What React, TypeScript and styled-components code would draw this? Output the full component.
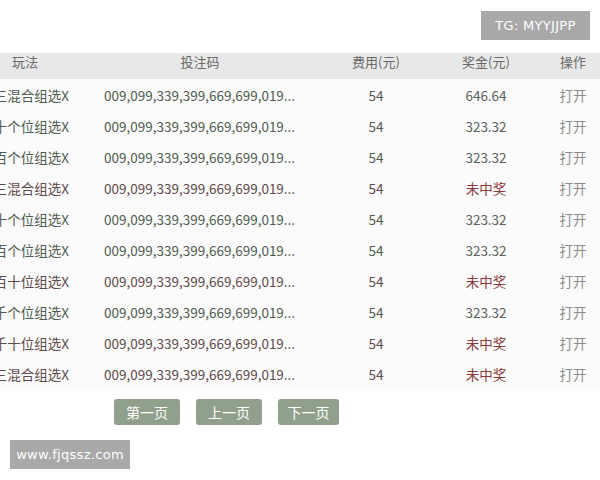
import React from "react";
import styled, { createGlobalStyle } from "styled-components";

const Global = createGlobalStyle`
  html, body { margin: 0; padding: 0; background: #ffffff; }
  body { width: 600px; height: 480px; overflow: hidden; font-family: "Noto Sans CJK SC", "Noto Sans", sans-serif; }
`;

const Page = styled.div`
  position: relative;
  width: 600px;
  height: 480px;
  overflow: hidden;
  background: #ffffff;
  padding-top: 53px;
  box-sizing: border-box;
`;

const Tag = styled.div`
  position: absolute;
  background: #a9a9a9;
  color: #ffffff;
  font-family: "DejaVu Sans", "Noto Sans", sans-serif;
  font-size: 13px;
  letter-spacing: 0.3px;
  display: flex;
  align-items: center;
  justify-content: center;
`;

const TopTag = styled(Tag)`
  top: 11px;
  left: 481px;
  width: 109px;
  height: 29px;
`;

const BottomTag = styled(Tag)`
  top: 440px;
  left: 10px;
  width: 120px;
  height: 29px;
`;

const Grid = styled.div`
  display: grid;
  grid-template-columns: 90px 220px 132px 88px 70px;
`;

const HeadRow = styled(Grid)`
  height: 26px;
  padding-bottom: 9px;
  box-sizing: border-box;
  background: #e8e8e8;
  color: #6a6a6a;
  font-size: 13px;
`;

const Body = styled.div`
  background: #fbfbfb;
`;

const Row = styled(Grid)`
  height: 31.1px;
  font-size: 13.5px;
`;

const Cell = styled.div<{ $align?: "left" | "center" | "right"; $pl?: number; $pr?: number; $color?: string }>`
  display: flex;
  align-items: center;
  justify-content: ${(p) => (p.$align === "left" ? "flex-start" : p.$align === "right" ? "flex-end" : "center")};
  padding-left: ${(p) => p.$pl ?? 0}px;
  padding-right: ${(p) => p.$pr ?? 0}px;
  white-space: nowrap;
  overflow: hidden;
  color: ${(p) => p.$color ?? "inherit"};
`;

const Pager = styled.div`
  display: flex;
  gap: 16px;
  padding-left: 114px;
  margin-top: 9px;
`;

const PageBtn = styled.div<{ $w: number }>`
  width: ${(p) => p.$w}px;
  height: 26px;
  background: #90a08d;
  border-radius: 3px;
  color: #ffffff;
  font-size: 14px;
  display: flex;
  align-items: center;
  justify-content: center;
`;

type R = { name: string; prize: string };
const rows: R[] = [
  { name: "三混合组选X", prize: "646.64" },
  { name: "十个位组选X", prize: "323.32" },
  { name: "百个位组选X", prize: "323.32" },
  { name: "三混合组选X", prize: "未中奖" },
  { name: "十个位组选X", prize: "323.32" },
  { name: "百个位组选X", prize: "323.32" },
  { name: "百十位组选X", prize: "未中奖" },
  { name: "千个位组选X", prize: "323.32" },
  { name: "千十位组选X", prize: "未中奖" },
  { name: "三混合组选X", prize: "未中奖" },
];

export default function App() {
  return (
    <>
      <Global />
      <Page>
        <TopTag>TG: MYYJJPP</TopTag>
        <HeadRow>
          <Cell $align="left" $pl={12}>玩法</Cell>
          <Cell>投注码</Cell>
          <Cell>费用(元)</Cell>
          <Cell>奖金(元)</Cell>
          <Cell $pl={16}>操作</Cell>
        </HeadRow>
        <Body>
          {rows.map((r, i) => {
            const lost = r.prize === "未中奖";
            const c = lost ? "#5e4a4a" : "#4f5c4f";
            return (
              <Row key={i}>
                <Cell $align="right" $pr={21} $color={c}>{r.name}</Cell>
                <Cell $align="left" $pl={14} $color={c}>009,099,339,399,669,699,019...</Cell>
                <Cell $color={c}>54</Cell>
                <Cell $color={lost ? "#8a3a3a" : "#5a625a"}>{r.prize}</Cell>
                <Cell $pl={16} $color="#8c8c8c">打开</Cell>
              </Row>
            );
          })}
        </Body>
        <Pager>
          <PageBtn $w={66}>第一页</PageBtn>
          <PageBtn $w={66}>上一页</PageBtn>
          <PageBtn $w={61}>下一页</PageBtn>
        </Pager>
        <BottomTag>www.fjqssz.com</BottomTag>
      </Page>
    </>
  );
}
